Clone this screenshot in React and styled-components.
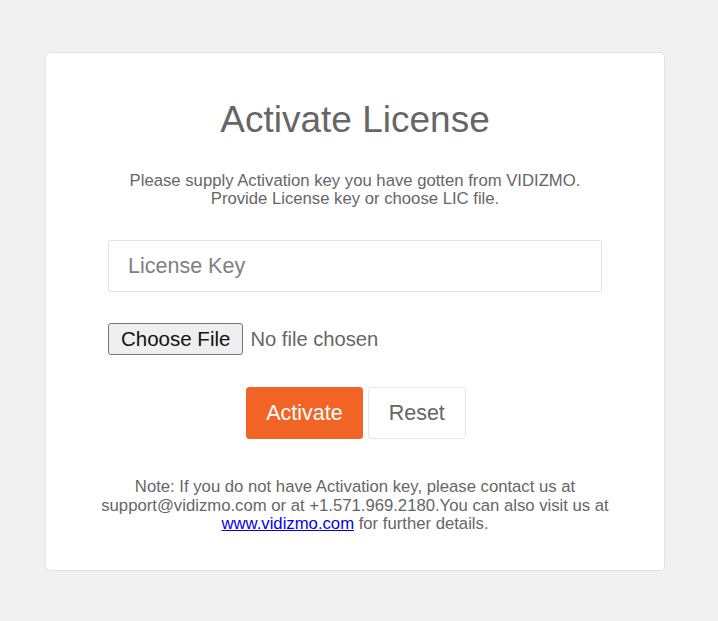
import React from "react";
import styled, { createGlobalStyle } from "styled-components";

const Global = createGlobalStyle`
  html, body { margin: 0; padding: 0; background: #f1f1f1; }
  body { font-family: "Liberation Sans", Arial, sans-serif; }
`;

const Page = styled.div`
  padding: 52px 0 0 45px;
  min-height: 621px;
  box-sizing: border-box;
`;

const Card = styled.div`
  width: 620px;
  height: 519px;
  box-sizing: border-box;
  background: #fff;
  border: 1px solid #e2e2e2;
  border-radius: 5px;
  padding: 44px 62px 0;
  display: flex;
  flex-direction: column;
  align-items: center;
`;

const Title = styled.h1`
  margin: 0;
  font-weight: normal;
  font-size: 37px;
  line-height: 46px;
  color: #666;
`;

const Lead = styled.p`
  margin: 29px 0 0;
  font-size: 16.7px;
  line-height: 18px;
  color: #666;
  text-align: center;
`;

const KeyInput = styled.input`
  margin-top: 32px;
  width: 100%;
  height: 52px;
  box-sizing: border-box;
  border: 1px solid #e3e3e3;
  border-radius: 2px;
  padding: 0 19px;
  font-family: "Liberation Sans", Arial, sans-serif;
  font-size: 21.5px;
  color: #555;
  outline: none;
  &::placeholder { color: #808080; }
`;

const FileRow = styled.label`
  align-self: stretch;
  margin-top: 31px;
  display: flex;
  align-items: center;
  gap: 7px;
  font-size: 20.2px;
  color: #666;
`;

const FileButton = styled.span`
  display: inline-flex;
  align-items: center;
  height: 32px;
  box-sizing: border-box;
  padding: 0 12px;
  background: #efefef;
  border: 1px solid #767676;
  border-radius: 3px;
  color: #111;
  font-size: 20.5px;
`;

const HiddenFile = styled.input`
  display: none;
`;

const Actions = styled.div`
  margin-top: 32px;
  display: flex;
  gap: 5px;
  transform: translateX(1px);
`;

const Button = styled.button`
  height: 52px;
  box-sizing: border-box;
  padding: 0 ${(p) => (p.$primary ? "19px" : "20px")};
  border-radius: 3px;
  border: 1px solid ${(p) => (p.$primary ? "#f26426" : "#e6e6e6")};
  background: ${(p) => (p.$primary ? "#f26426" : "#fff")};
  color: ${(p) => (p.$primary ? "#fff" : "#666")};
  font-family: "Liberation Sans", Arial, sans-serif;
  font-size: 21.5px;
  cursor: pointer;
`;

const Note = styled.p`
  margin: 39px 0 0;
  font-size: 16.7px;
  line-height: 18.5px;
  color: #666;
  text-align: center;
  white-space: nowrap;
  a { color: #0000ee; }
`;

export default function App() {
  return (
    <Page>
      <Global />
      <Card>
        <Title>Activate License</Title>
        <Lead>
          Please supply Activation key you have gotten from VIDIZMO.
          <br />
          Provide License key or choose LIC file.
        </Lead>
        <KeyInput placeholder="License Key" />
        <FileRow>
          <FileButton>Choose File</FileButton>
          No file chosen
          <HiddenFile type="file" />
        </FileRow>
        <Actions>
          <Button $primary>Activate</Button>
          <Button>Reset</Button>
        </Actions>
        <Note>
          Note: If you do not have Activation key, please contact us at
          <br />
          support@vidizmo.com or at +1.571.969.2180.You can also visit us at
          <br />
          <a href="#">www.vidizmo.com</a> for further details.
        </Note>
      </Card>
    </Page>
  );
}
